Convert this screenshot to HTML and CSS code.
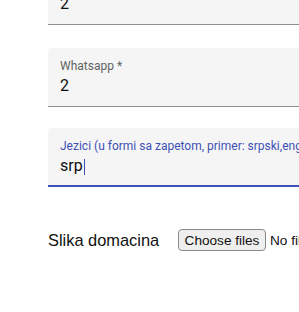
FILE: index.html
```html
<!DOCTYPE html>
<html>
<head>
<meta charset="utf-8">
<link rel="stylesheet" href="styles.css">
</head>
<body>
<form class="form">
  <div class="field field-first">
    <label class="field-label">Telefon *</label>
    <div class="field-value">2</div>
  </div>
  <div class="field field-second">
    <label class="field-label">Whatsapp *</label>
    <div class="field-value">2</div>
  </div>
  <div class="field field-focused">
    <label class="field-label">Jezici (u formi sa zapetom, primer: srpski,engleski) *</label>
    <div class="field-value">srp<span class="caret"></span></div>
  </div>
  <div class="file-row">
    <span class="file-label">Slika domacina</span>
    <span class="file-button">Choose files</span>
    <span class="file-status">No file chosen</span>
  </div>
</form>
</body>
</html>
```
FILE: styles.css
```css
html, body {
  margin: 0;
  padding: 0;
  background: #ffffff;
  overflow: hidden;
}
body {
  width: 299px;
  height: 312px;
}
.form {
  display: flex;
  flex-direction: column;
  padding-left: 48px;
  width: 420px;
}
.field {
  box-sizing: border-box;
  height: 59px;
  background: #f5f5f5;
  border-radius: 4px 4px 0 0;
  border-bottom: 1px solid #8f8f8f;
  padding: 10px 12px 0 12px;
  font-family: Roboto, "Noto Sans", sans-serif;
  white-space: nowrap;
}
.field-first {
  margin-top: -34px;
}
.field-second {
  margin-top: 23px;
}
.field-focused {
  margin-top: 21px;
  border-bottom: 2px solid #3f51b5;
}
.field-label {
  display: block;
  font-size: 12px;
  line-height: 16px;
  color: #626262;
}
.field-focused .field-label {
  color: #3f51b5;
}
.field-value {
  margin-top: 2px;
  font-size: 16px;
  line-height: 20px;
  color: #111111;
}
.caret {
  display: inline-block;
  width: 1px;
  height: 16px;
  background: #3f51b5;
  vertical-align: -4px;
  margin-left: 1px;
}
.file-row {
  display: flex;
  align-items: center;
  margin-top: 42px;
  font-family: "Liberation Sans", Arial, sans-serif;
  white-space: nowrap;
}
.file-label {
  width: 130px;
  flex: none;
  font-size: 16.4px;
  color: #111111;
}
.file-button {
  box-sizing: border-box;
  width: 88px;
  height: 22px;
  flex: none;
  display: flex;
  align-items: center;
  justify-content: center;
  border: 1px solid #8a8a8a;
  border-radius: 4px;
  background: #efefef;
  font-size: 13.6px;
  color: #111111;
}
.file-status {
  margin-left: 4px;
  font-size: 13.6px;
  color: #111111;
}
```
